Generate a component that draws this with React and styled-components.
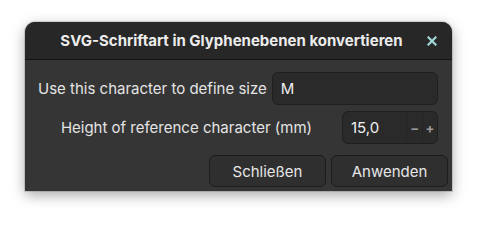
import React, { useState } from "react";
import styled, { createGlobalStyle } from "styled-components";

const GlobalStyle = createGlobalStyle`
  html, body {
    margin: 0;
    padding: 0;
    background: #ffffff;
  }
  body {
    font-family: Inter, "Noto Sans", sans-serif;
    font-size: 15px;
  }
`;

const Page = styled.div`
  padding: 22px 25px 28px;
`;

const Dialog = styled.div`
  width: 427px;
  background: #353535;
  color: #e6e6e6;
  border-radius: 10px 10px 0 0;
  box-shadow: 0 4px 14px rgba(0, 0, 0, 0.35), 0 0 0 1px rgba(0, 0, 0, 0.12);
  overflow: hidden;
`;

const Header = styled.div`
  height: 37px;
  background: #272727;
  border-bottom: 1px solid #141414;
  display: flex;
  align-items: center;
  position: relative;
`;

const Title = styled.div`
  flex: 1;
  text-align: center;
  font-weight: 700;
  font-size: 15px;
  padding-right: 14px;
  color: #ececec;
`;

const CloseButton = styled.button`
  position: absolute;
  right: 12px;
  top: 10px;
  width: 17px;
  height: 17px;
  padding: 0;
  border: 0;
  background: transparent;
  display: flex;
  align-items: center;
  justify-content: center;
  cursor: pointer;
`;

const Body = styled.div`
  padding: 12px 14px 0 13px;
  display: flex;
  flex-direction: column;
  gap: 6px;
`;

const Row = styled.div`
  display: flex;
  align-items: center;
  justify-content: flex-end;
  gap: ${(p) => p.$gap}px;
`;

const Label = styled.label`
  white-space: nowrap;
  color: #e4e4e4;
`;

const Entry = styled.input`
  width: 167px;
  min-width: 0;
  height: 33px;
  box-sizing: border-box;
  background: #2a2a2a;
  border: 1px solid #1f1f1f;
  border-radius: 6px;
  color: #f0f0f0;
  font: inherit;
  padding: 0 8px;
  outline: none;
`;

const Spin = styled.div`
  width: 96px;
  height: 33px;
  box-sizing: border-box;
  background: #2a2a2a;
  border: 1px solid #1f1f1f;
  border-radius: 6px;
  display: flex;
  overflow: hidden;
`;

const SpinValue = styled.input`
  width: 62px;
  min-width: 0;
  border: 0;
  background: transparent;
  color: #f0f0f0;
  font: inherit;
  padding: 0 0 0 8px;
  outline: none;
`;

const SpinStep = styled.button`
  width: 17px;
  border: 0;
  border-left: 1px solid #242424;
  background: transparent;
  color: #9a9a9a;
  padding: 0;
  font: inherit;
  font-weight: 700;
  font-size: 13px;
  display: flex;
  align-items: center;
  justify-content: center;
`;

const Actions = styled.div`
  display: flex;
  justify-content: flex-end;
  gap: 5px;
  padding: 11px 4px 4px;
`;

const ActionButton = styled.button`
  width: 117px;
  height: 32px;
  background: #2f2f2f;
  border: 1px solid #1c1c1c;
  border-radius: 6px;
  color: #e6e6e6;
  font: inherit;
  cursor: pointer;
`;

export default function App() {
  const [glyph, setGlyph] = useState("M");
  const [height, setHeight] = useState(15);

  return (
    <Page>
      <GlobalStyle />
      <Dialog>
        <Header>
          <Title>SVG-Schriftart in Glyphenebenen konvertieren</Title>
          <CloseButton aria-label="close">
            <svg width="10" height="10" viewBox="0 0 10 10">
              <path d="M1.5 1.5 L8.5 8.5 M8.5 1.5 L1.5 8.5" stroke="#9fd8d6" strokeWidth="2.2" strokeLinecap="square" />
            </svg>
          </CloseButton>
        </Header>
        <Body>
          <Row $gap={5}>
            <Label>Use this character to define size</Label>
            <Entry value={glyph} onChange={(e) => setGlyph(e.target.value)} />
          </Row>
          <Row $gap={30}>
            <Label>Height of reference character (mm)</Label>
            <Spin>
              <SpinValue value={height.toFixed(1).replace(".", ",")} readOnly />
              <SpinStep onClick={() => setHeight((h) => h - 1)}>−</SpinStep>
              <SpinStep onClick={() => setHeight((h) => h + 1)}>+</SpinStep>
            </Spin>
          </Row>
        </Body>
        <Actions>
          <ActionButton>Schließen</ActionButton>
          <ActionButton>Anwenden</ActionButton>
        </Actions>
      </Dialog>
    </Page>
  );
}
